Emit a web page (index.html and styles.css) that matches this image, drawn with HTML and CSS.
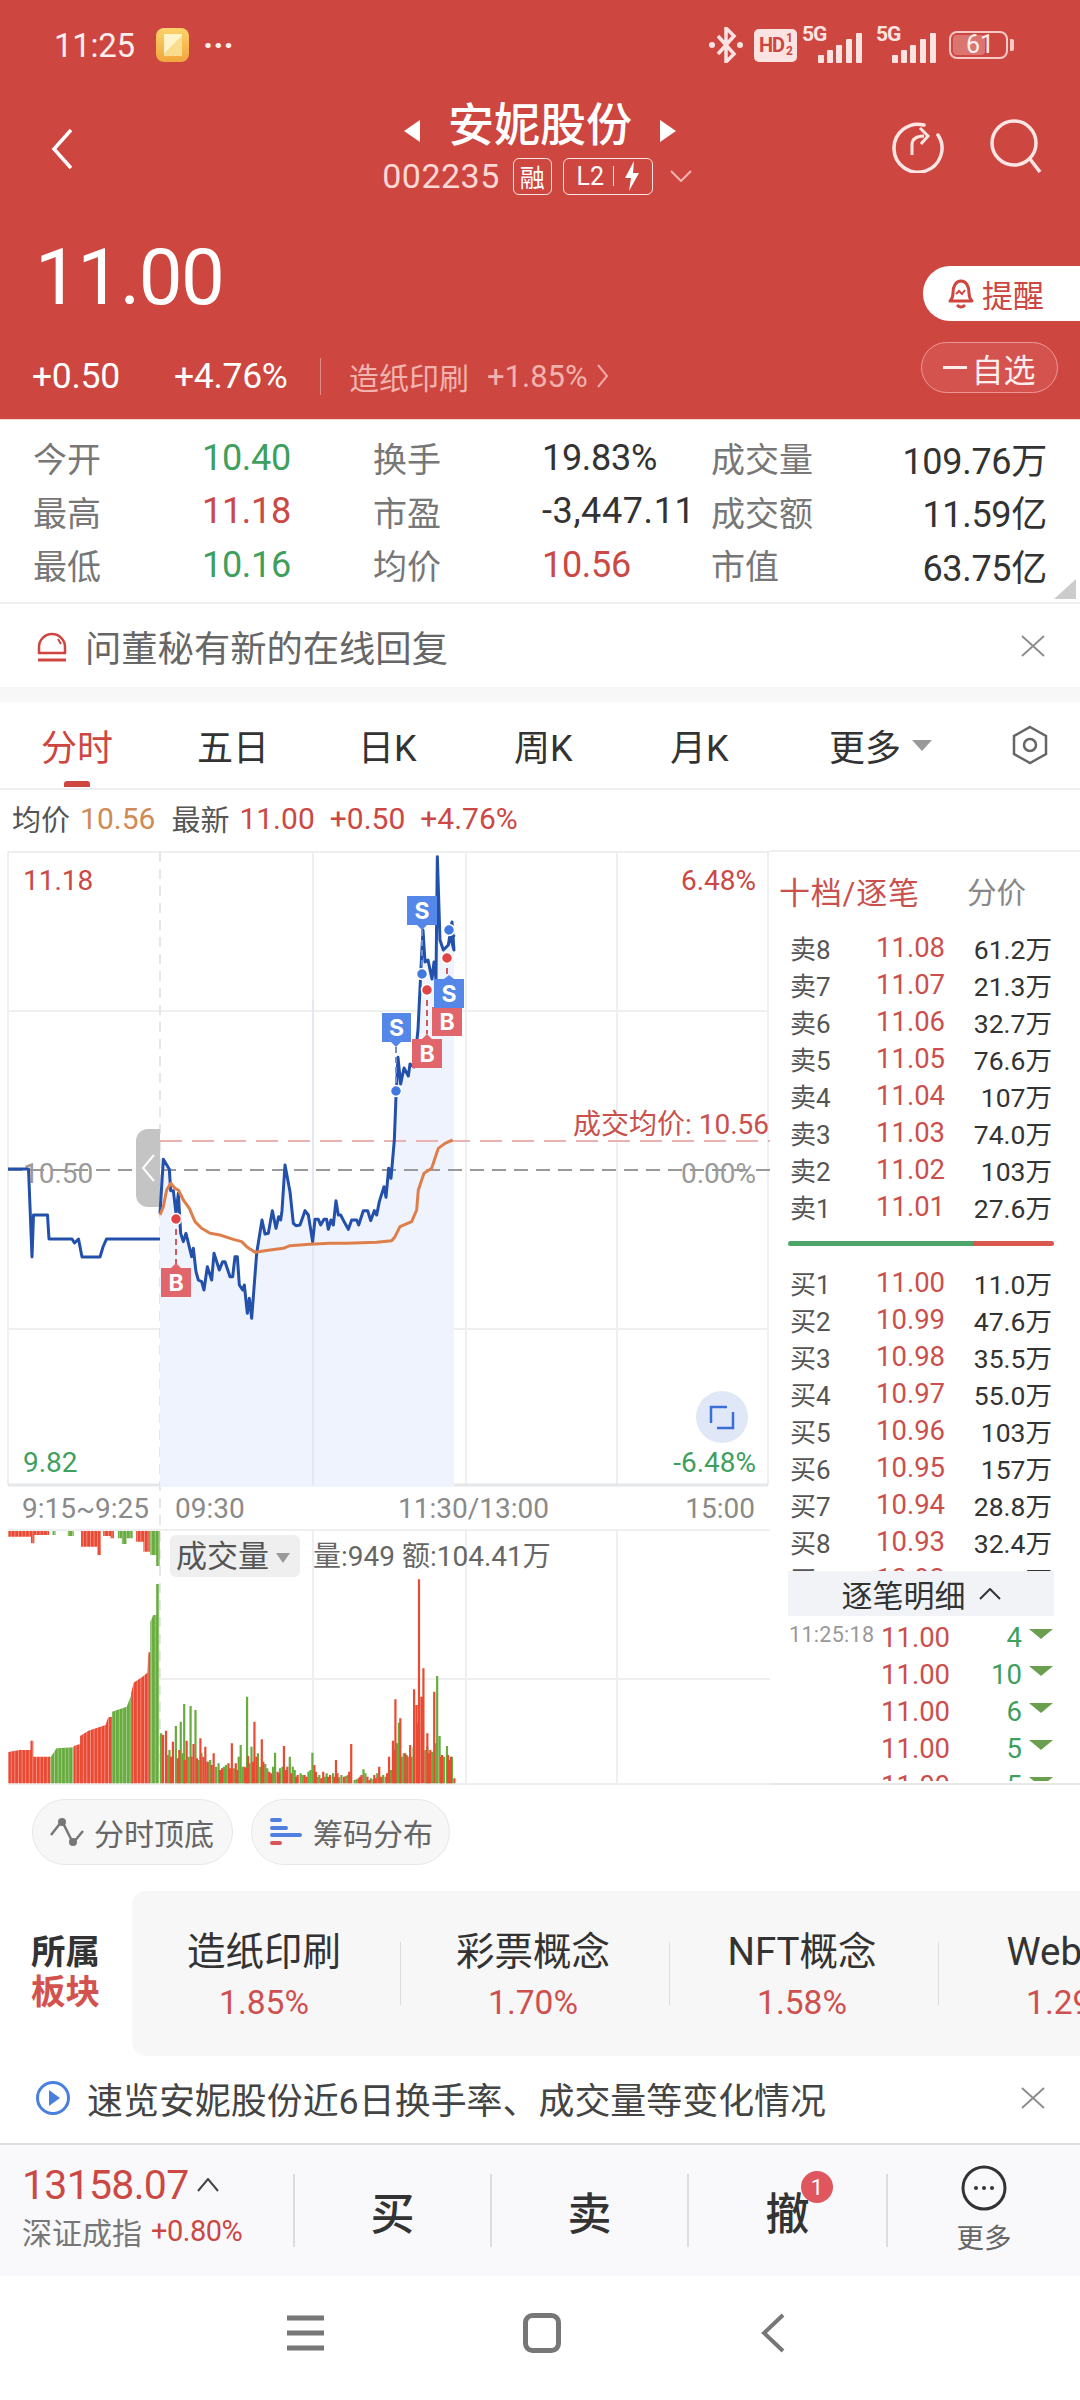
FILE: index.html
```html
<!DOCTYPE html>
<html lang="zh-CN">
<head>
<meta charset="utf-8">
<title>安妮股份</title>
<link rel="stylesheet" href="styles.css">
</head>
<body>
<div class="page">

<header class="head">
  <div class="status">
    <span class="clock">11:25</span>
    <span class="noteicon"><span class="notefold"></span></span>
    <span class="dots">···</span>
    <span class="status-right">
      <svg class="bt" width="34" height="36" viewBox="0 0 34 36"><path d="M9 9l16 18-8 8V1l8 8L9 27" fill="none" stroke="#fbe3e1" stroke-width="3.500"/><circle cx="3" cy="18" r="3" fill="#fbe3e1"/><circle cx="31" cy="18" r="3" fill="#fbe3e1"/></svg>
      <span class="hd">HD<span class="hdfrac">1<br>2</span></span>
      <span class="sig"><span class="fiveg">5G</span>
        <svg width="44" height="30" viewBox="0 0 44 30"><g fill="#fbe3e1"><rect x="0" y="22" width="6" height="8" rx="1"/><rect x="9" y="17" width="6" height="13" rx="1"/><rect x="18" y="12" width="6" height="18" rx="1"/><rect x="28" y="6" width="6" height="24" rx="1"/><rect x="38" y="0" width="6" height="30" rx="1"/></g></svg>
      </span>
      <span class="sig sig2"><span class="fiveg">5G</span>
        <svg width="44" height="30" viewBox="0 0 44 30"><g fill="#fbe3e1"><rect x="0" y="22" width="6" height="8" rx="1"/><rect x="9" y="17" width="6" height="13" rx="1"/><rect x="18" y="12" width="6" height="18" rx="1"/><rect x="28" y="6" width="6" height="24" rx="1"/><rect x="38" y="0" width="6" height="30" rx="1"/></g></svg>
      </span>
      <span class="batt"><span class="battfill"></span><span class="battnum">61</span></span>
      <span class="batttip"></span>
    </span>
  </div>

  <div class="navrow">
    <svg class="back" width="24" height="44" viewBox="0 0 24 44"><path d="M21 3L4 22l17 19" fill="none" stroke="#fff" stroke-width="3.5"/></svg>
    <div class="titlebox">
      <div class="titleline">
        <span class="tri-l"></span>
        <span class="title">安妮股份</span>
        <span class="tri-r"></span>
      </div>
      <div class="codeline">
        <span class="code">002235</span>
        <span class="tag tag-rong">融</span>
        <span class="tag tag-l2">L2<i class="tagbar"></i>
          <svg width="18" height="30" viewBox="0 0 18 30"><path d="M11 0L2 17h6L6 30l10-18h-6z" fill="#fff"/></svg>
        </span>
        <svg class="codechev" width="22" height="12" viewBox="0 0 22 12"><path d="M1 1l10 10L21 1" fill="none" stroke="#f3b5b0" stroke-width="2"/></svg>
      </div>
    </div>
    <div class="navicons">
      <svg width="54" height="54" viewBox="0 0 54 54"><path d="M34 6A24 24 0 1 0 48 16" fill="none" stroke="#fbe6e4" stroke-width="3.5" stroke-linecap="round"/><path d="M22 36V26q0-9 12-9" fill="none" stroke="#fbe6e4" stroke-width="3"/><path d="M30 9l8 8-7 8" fill="none" stroke="#fbe6e4" stroke-width="3"/></svg>
      <svg width="54" height="54" viewBox="0 0 54 54"><circle cx="25" cy="24" r="22" fill="none" stroke="#fbe6e4" stroke-width="3.5"/><path d="M41 40l10 13" stroke="#fbe6e4" stroke-width="3.5" fill="none"/></svg>
    </div>
  </div>

  <div class="pricerow">
    <div class="pricecol">
      <div class="price">11.00</div>
      <div class="chg">
        <span class="chg1">+0.50</span>
        <span class="chg2">+4.76%</span>
        <span class="chgsep"></span>
        <span class="ind">造纸印刷</span>
        <span class="indpct">+1.85%</span>
        <svg width="12" height="24" viewBox="0 0 12 24"><path d="M1 1l9 11-9 11" fill="none" stroke="#f2a9a4" stroke-width="2"/></svg>
      </div>
    </div>
    <div class="btncol">
      <div class="remind">
        <svg width="30" height="32" viewBox="0 0 30 32"><path d="M4 23c2-2 3-4 3-8 0-7 3-12 8-12s8 5 8 12c0 4 1 6 3 8z" fill="none" stroke="#cf4640" stroke-width="3" stroke-linejoin="round"/><path d="M11 27q4 4 8 0" fill="none" stroke="#cf4640" stroke-width="3"/><path d="M10 16l3-3 3 3 3-4" fill="none" stroke="#cf4640" stroke-width="2"/></svg>
        <span>提醒</span>
      </div>
      <div class="addfav"><span class="addminus"></span>自选</div>
    </div>
  </div>
</header>

<section class="stats">
  <span class="lb">今开</span><span class="num green">10.40</span><span class="lb">换手</span><span class="num">19.83%</span><span class="lb">成交量</span><span class="num rt">109.76万</span>
  <span class="lb">最高</span><span class="num red">11.18</span><span class="lb">市盈</span><span class="num wide">-3,447.11</span><span class="lb">成交额</span><span class="num rt">11.59亿</span>
  <span class="lb">最低</span><span class="num green">10.16</span><span class="lb">均价</span><span class="num red">10.56</span><span class="lb">市值</span><span class="num rt">63.75亿</span>
  <span class="corner"></span>
</section>

<section class="notice notice-a">
  <svg width="32" height="32" viewBox="0 0 32 32"><path d="M3 23v-6a13 13 0 0 1 26 0v6z" fill="none" stroke="#cf4640" stroke-width="2.5"/><path d="M2 30h28" stroke="#cf4640" stroke-width="3"/><path d="M22 9l3 5" stroke="#cf4640" stroke-width="2"/></svg>
  <span class="noticetxt">问董秘有新的在线回复</span>
  <svg class="close" width="24" height="22" viewBox="0 0 24 22"><path d="M1 1l22 20M23 1L1 21" stroke="#8b8b8b" stroke-width="1.8" fill="none"/></svg>
</section>

<div class="gap"></div>

<nav class="tabs">
  <span class="tab tab-on">分时</span>
  <span class="tab">五日</span>
  <span class="tab">日K</span>
  <span class="tab">周K</span>
  <span class="tab">月K</span>
  <span class="tab">更多<i class="tabtri"></i></span>
  <svg class="hex" width="36" height="40" viewBox="0 0 36 40"><path d="M18 2l16 9v18l-16 9-16-9V11z" fill="none" stroke="#666" stroke-width="2.5"/><circle cx="18" cy="20" r="6" fill="none" stroke="#666" stroke-width="2.5"/></svg>
</nav>

<div class="summary">
  <span class="s-lb">均价</span><span class="s-avg">10.56</span><span class="s-lb s-new">最新</span><span class="s-red">11.00</span><span class="s-red">+0.50</span><span class="s-red">+4.76%</span>
</div>

<main class="market">
  <svg class="chart" width="770" height="935" viewBox="0 850 770 935">
    <defs>
      <pattern id="stripes" width="3.6" height="10" patternUnits="userSpaceOnUse"><rect width=".9" height="10" fill="#fff" fill-opacity=".4"/></pattern>
    </defs>
    <!-- grid -->
    <path class="grid" d="M8 852H770M8 852V1485M8 1011H768M8 1329H768M313 852V1485M466 852V1485M617 852V1485M768 852V1485"/>
    <path class="gridb" d="M8 1485H768"/>
    <path class="gridd" d="M160 852V1780"/>
    <!-- area -->
    <g transform="translate(130 1100) scale(.33333)">
      <polygon class="area" points="90,340 100,178 118,208 122,272 130,272 138,340 145,280 152,400 160,425 168,400 185,470 190,445 198,515 205,540 215,545 222,570 232,500 245,540 252,460 268,510 278,485 285,485 300,530 308,530 315,470 322,470 328,555 338,570 343,555 352,640 358,595 365,655 380,460 396,360 405,402 415,400 427,332 438,385 446,350 452,360 456,332 465,195 480,275 490,370 498,377 510,375 525,332 535,345 548,425 555,358 565,358 572,375 582,358 590,358 595,388 603,360 610,375 618,302 625,345 632,345 645,370 655,388 665,360 680,360 686,375 700,332 713,332 722,362 733,332 740,345 748,305 762,260 768,292 776,205 783,235 793,120 798,-10 804,-128 812,-48 822,-96 835,-72 840,-108 852,-99 864,-210 875,-438 879,-510 885,-414 894,-420 906,-363 912,-414 918,-363 922,-730 930,-480 940,-450 955,-465 966,-534 972,-450 972,1160 90,1160"/>
    </g>
    <path class="gridl" d="M313 1000V1485"/>
    <!-- dashes -->
    <path class="redline" d="M160 1141H770"/>
    <path class="graymid" d="M8 1170H770"/>
    <!-- labels -->
    <text class="ct red-t" x="23" y="890">11.18</text>
    <text class="ct red-t" x="756" y="890" text-anchor="end">6.48%</text>
    <text class="ct gray-t" x="23" y="1183">10.50</text>
    <text class="ct gray-t" x="756" y="1183" text-anchor="end">0.00%</text>
    <text class="ct green-t" x="23" y="1472">9.82</text>
    <text class="ct green-t" x="756" y="1472" text-anchor="end">-6.48%</text>
    <text class="ct avglabel" x="769" y="1134" text-anchor="end">成交均价: 10.56</text>
    <!-- handle -->
    <path d="M160 1129h-12a12 12 0 0 0-12 12v54a12 12 0 0 0 12 12h12z" fill="#c4c4c4"/>
    <path d="M154 1155l-11 13 11 13" fill="none" stroke="#fff" stroke-width="2"/>
    <!-- lines -->
    <polyline class="pline" points="8,1169 28.5,1169 32,1257 33.5,1215 47.5,1215 49,1239 72,1239 74.5,1243 78.5,1239 82,1257 100,1257 103,1247 106.5,1239 160,1239"/>
    <g transform="translate(130 1100) scale(.33333)">
      <polyline class="pline" points="90,340 100,178 118,208 122,272 130,272 138,340 145,280 152,400 160,425 168,400 185,470 190,445 198,515 205,540 215,545 222,570 232,500 245,540 252,460 268,510 278,485 285,485 300,530 308,530 315,470 322,470 328,555 338,570 343,555 352,640 358,595 365,655 380,460 396,360 405,402 415,400 427,332 438,385 446,350 452,360 456,332 465,195 480,275 490,370 498,377 510,375 525,332 535,345 548,425 555,358 565,358 572,375 582,358 590,358 595,388 603,360 610,375 618,302 625,345 632,345 645,370 655,388 665,360 680,360 686,375 700,332 713,332 722,362 733,332 740,345 748,305 762,260 768,292 776,205 783,235 793,120 798,-10 804,-128 812,-48 822,-96 835,-72 840,-108 852,-99 864,-210 875,-438 879,-510 885,-414 894,-420 906,-363 912,-414 918,-363 922,-730 930,-480 940,-450 955,-465 966,-534 972,-450 960,-495 975,-490"/>
      <polyline class="aline" points="90,345 100,320 110,270 122,250 135,265 145,270 160,300 178,325 195,365 215,385 240,400 270,405 310,418 335,425 350,440 375,457 420,450 460,445 480,437 540,433 600,430 650,430 740,427 785,422 795,410 810,380 845,365 860,330 865,270 882,220 905,205 925,145 945,130 968,120"/>
    </g>
    <!-- trade markers -->
    <path class="dash-r" d="M176 1219V1265"/>
    <path class="dash-b" d="M396 1047V1091"/>
    <path class="dash-b" d="M422 930V974"/>
    <path class="dash-r" d="M427 990V1034"/>
    <path class="dash-r" d="M447 958V975"/>
    <circle class="dot-r" cx="176" cy="1219" r="5.5"/>
    <circle class="dot-b" cx="396" cy="1091" r="5.5"/>
    <circle class="dot-b" cx="422" cy="974" r="5.5"/>
    <circle class="dot-r" cx="427" cy="990" r="5.5"/>
    <circle class="dot-r" cx="447" cy="958" r="5.5"/>
    <circle class="dot-b" cx="449" cy="930" r="5.5"/>

    <g><polygon class="mk-r" points="161,1268 171,1268 176,1263 181,1268 191,1268 191,1297 161,1297"/><text class="mk-t" x="176" y="1291">B</text></g>
    <g><polygon class="mk-r" points="412,1039 422,1039 427,1034 432,1039 442,1039 442,1068 412,1068"/><text class="mk-t" x="427" y="1062">B</text></g>
    <g><rect class="mk-r" x="432" y="1007" width="30" height="29"/><text class="mk-t" x="447" y="1030">B</text></g>
    <g><polygon class="mk-b" points="382,1013 411,1013 411,1042 401,1042 396,1047 391,1042 382,1042"/><text class="mk-t" x="396.500" y="1036">S</text></g>
    <g><polygon class="mk-b" points="407,896 437,896 437,925 427,925 422,930 417,925 407,925"/><text class="mk-t" x="422" y="919">S</text></g>
    <g><polygon class="mk-b" points="434,979 444,979 449,975 454,979 464,979 464,1008 434,1008"/><text class="mk-t" x="449" y="1002">S</text></g>

    <!-- expand -->
    <circle cx="722" cy="1417" r="26" fill="#e0e8f7"/>
    <path d="M711 1423v-16h16M733 1412v16h-16" fill="none" stroke="#3a6fd8" stroke-width="2.5"/>

    <!-- time axis -->
    <text class="ct axis" x="22" y="1518">9:15~9:25</text>
    <text class="ct axis" x="175" y="1518">09:30</text>
    <text class="ct axis" x="398" y="1518">11:30/13:00</text>
    <text class="ct axis" x="755" y="1518" text-anchor="end">15:00</text>

    <!-- volume grid -->
    <path class="grid" d="M8 1530H770M160 1679H770M313 1530V1784M466 1530V1784M617 1530V1784M8 1784H770"/>
    <!-- volume bars -->
    <g transform="translate(0 1490) scale(.4912 .33333)">
      <path class="vol-r" d="M17 123H100V135H70V160H63V140H17Z M165 123H205V195H198V170H165Z M210 123H232V145H225V138H210Z M277 123H305V185H292V155H277Z"/>
      <path class="vol-g" d="M107 123h6V135h-6Z M138 123h12V138h-12Z M240 123H270V145H258V162H248V145H240Z M306 123H325V228H318V195H306Z"/>
      <path class="vol-r" d="M17 880V786L40 780H62V752H68V800H103V880Z M150 880V768L163 762V738L180 722L215 705L220 682L228 680V880Z M267 880V610L272 578L290 560L300 548L302 487L306 487V880Z"/>
      <path class="vol-g" d="M103 880V802L115 775L150 772V880Z M228 880V665L258 650L268 612V880Z M306 880V395L312 375H318V282H324V880Z"/>
      <path class="vbar-g" d="M328 880V730M358 880V708M368 880V695M375 880V642M388 880V648M398 880V660M345 880V780M410 880V790M428 880V810M445 880V820M460 880V825M490 880V765M503 880V620M512 880V770M525 880V790M540 880V822M560 880V788M575 880V830M590 880V800M600 880V840M612 880V850M628 880V845M636 880V788M650 880V855M665 880V850M678 880V850M695 880V855M708 880V855M722 880V870M740 880V838M755 880V865M768 880V850M785 880V860M812 880V698M822 880V790M828 880V795M842 880V770M870 880V770M880 880V785M890 880V558M895 880V738M910 880V768M920 880V800"/>
      <path class="vbar-g" d="M342 880V795M372 880V790M384 880V800M404 880V810M424 880V815M440 880V830M456 880V830M476 880V835M486 880V800M494 880V830M508 880V820M530 880V830M544 880V835M556 880V830M570 880V835M596 880V830M616 880V855M632 880V840M646 880V860M662 880V860M690 880V862M704 880V858M726 880V868M744 880V850M760 880V868M780 880V855M796 880V840M808 880V760M818 880V800M838 880V800M866 880V780M888 880V760M904 880V800"/>
      <path class="vbar-r" d="M332 880V735M338 880V722M352 880V755M365 880V780M380 880V752M394 880V762M408 880V745M418 880V770M435 880V790M452 880V835M465 880V820M472 880V760M480 880V820M498 880V830M505 880V798M518 880V695M533 880V748M548 880V845M565 880V845M578 880V768M585 880V830M606 880V855M620 880V855M640 880V825M658 880V845M672 880V855M684 880V810M700 880V860M715 880V762M730 880V865M736 880V855M748 880V860M762 880V855M772 880V830M792 880V800M800 880V752M805 880V628M815 880V685M825 880V790M835 880V765M843 880V598M848 880V645M853 880V268M858 880V620M862 880V535M870 880V730M876 880V780M884 880V605M900 880V795M912 880V795M918 880V800M925 880V865"/>
      <path class="vbar-r" d="M348 880V800M362 880V805M376 880V810M390 880V800M401 880V805M414 880V800M422 880V815M431 880V825M448 880V840M468 880V835M483 880V840M501 880V835M515 880V815M522 880V800M536 880V815M552 880V850M568 880V850M582 880V840M593 880V850M603 880V860M624 880V860M643 880V845M654 880V865M668 880V860M681 880V860M687 880V850M711 880V845M733 880V860M752 880V870M765 880V865M776 880V860M788 880V850M803 880V780M830 880V800M851 880V700M873 880V790M898 880V800M915 880V810"/>
    </g>
    <rect x="8" y="1531" width="152" height="253" fill="url(#stripes)"/>
    <!-- volume chip -->
    <rect x="170" y="1535" width="130" height="42" rx="6" fill="#efefef"/>
    <text class="ct chip-t" x="176" y="1567">成交量</text>
    <path d="M276 1553h14l-7 10z" fill="#9a9a9a"/>
    <text class="ct vol-t" x="313" y="1566">量:949 额:104.41万</text>
  </svg>

  <aside class="book">
    <div class="bookhead"><span class="bh-a">十档/逐笔</span><span class="bh-b">分价</span></div>
    <div class="rows">
      <div class="row"><span class="r-l">卖8</span><span class="r-p">11.08</span><span class="r-v">61.2万</span></div>
      <div class="row"><span class="r-l">卖7</span><span class="r-p">11.07</span><span class="r-v">21.3万</span></div>
      <div class="row"><span class="r-l">卖6</span><span class="r-p">11.06</span><span class="r-v">32.7万</span></div>
      <div class="row"><span class="r-l">卖5</span><span class="r-p">11.05</span><span class="r-v">76.6万</span></div>
      <div class="row"><span class="r-l">卖4</span><span class="r-p">11.04</span><span class="r-v">107万</span></div>
      <div class="row"><span class="r-l">卖3</span><span class="r-p">11.03</span><span class="r-v">74.0万</span></div>
      <div class="row"><span class="r-l">卖2</span><span class="r-p">11.02</span><span class="r-v">103万</span></div>
      <div class="row"><span class="r-l">卖1</span><span class="r-p">11.01</span><span class="r-v">27.6万</span></div>
    </div>
    <div class="ratio"><span class="ratio-g"></span><span class="ratio-r"></span></div>
    <div class="rows rows-buy">
      <div class="row"><span class="r-l">买1</span><span class="r-p">11.00</span><span class="r-v">11.0万</span></div>
      <div class="row"><span class="r-l">买2</span><span class="r-p">10.99</span><span class="r-v">47.6万</span></div>
      <div class="row"><span class="r-l">买3</span><span class="r-p">10.98</span><span class="r-v">35.5万</span></div>
      <div class="row"><span class="r-l">买4</span><span class="r-p">10.97</span><span class="r-v">55.0万</span></div>
      <div class="row"><span class="r-l">买5</span><span class="r-p">10.96</span><span class="r-v">103万</span></div>
      <div class="row"><span class="r-l">买6</span><span class="r-p">10.95</span><span class="r-v">157万</span></div>
      <div class="row"><span class="r-l">买7</span><span class="r-p">10.94</span><span class="r-v">28.8万</span></div>
      <div class="row"><span class="r-l">买8</span><span class="r-p">10.93</span><span class="r-v">32.4万</span></div>
      <div class="row"><span class="r-l">买9</span><span class="r-p">10.92</span><span class="r-v">15.7万</span></div>
    </div>
    <div class="detail">逐笔明细<svg width="22" height="12" viewBox="0 0 22 12"><path d="M1 11L11 1l10 10" fill="none" stroke="#333" stroke-width="2"/></svg></div>
    <div class="trades">
      <div class="trade"><span class="t-t">11:25:18</span><span class="r-p">11.00</span><span class="t-q">4</span><i class="t-a"></i></div>
      <div class="trade"><span class="t-t"></span><span class="r-p">11.00</span><span class="t-q">10</span><i class="t-a"></i></div>
      <div class="trade"><span class="t-t"></span><span class="r-p">11.00</span><span class="t-q">6</span><i class="t-a"></i></div>
      <div class="trade"><span class="t-t"></span><span class="r-p">11.00</span><span class="t-q">5</span><i class="t-a"></i></div>
      <div class="trade"><span class="t-t"></span><span class="r-p">11.00</span><span class="t-q">5</span><i class="t-a"></i></div>
    </div>
  </aside>
</main>

<section class="tools">
  <span class="toolchip chip-a">
    <svg width="36" height="30" viewBox="0 0 36 30"><path d="M2 18L13 4l11 22 10-12" fill="none" stroke="#777" stroke-width="2.5"/><circle cx="13" cy="5" r="4" fill="#777"/><circle cx="24" cy="25" r="4" fill="#777"/></svg>
    分时顶底
  </span>
  <span class="toolchip chip-b">
    <svg width="32" height="30" viewBox="0 0 32 30"><g stroke-width="4" stroke-linecap="round"><path d="M2 3h8M2 11h14" stroke="#4f80e0"/><path d="M2 18h28" stroke="#4f80e0"/><path d="M2 26h8" stroke="#d9555a"/></g></svg>
    筹码分布
  </span>
</section>

<section class="sectors">
  <div class="sec-label"><span>所属</span><span class="sec-red">板块</span></div>
  <div class="sec-card">
    <div class="sec"><span class="sec-n">造纸印刷</span><span class="sec-p">1.85%</span></div>
    <div class="sec"><span class="sec-n">彩票概念</span><span class="sec-p">1.70%</span></div>
    <div class="sec"><span class="sec-n">NFT概念</span><span class="sec-p">1.58%</span></div>
    <div class="sec"><span class="sec-n">Web3.0</span><span class="sec-p">1.29%</span></div>
  </div>
</section>

<section class="notice notice-b">
  <svg width="36" height="36" viewBox="0 0 36 36"><circle cx="18" cy="18" r="15.500" fill="none" stroke="#4a7fdf" stroke-width="3"/><path d="M14 10l11 8-11 8z" fill="#4a7fdf"/></svg>
  <span class="noticetxt txt-dark">速览安妮股份近6日换手率、成交量等变化情况</span>
  <svg class="close" width="24" height="22" viewBox="0 0 24 22"><path d="M1 1l22 20M23 1L1 21" stroke="#8b8b8b" stroke-width="1.800" fill="none"/></svg>
</section>

<section class="actions">
  <div class="act-index">
    <div class="idx-top"><span class="idx-num">13158.07</span><svg width="22" height="14" viewBox="0 0 22 14"><path d="M1 13L11 1l10 12" fill="none" stroke="#444" stroke-width="2"/></svg></div>
    <div class="idx-sub"><span class="idx-name">深证成指</span><span class="idx-pct">+0.80%</span></div>
  </div>
  <div class="act">买</div>
  <div class="act">卖</div>
  <div class="act act-badge">撤<span class="badge">1</span></div>
  <div class="act act-more">
    <svg class="moreicon" width="46" height="46" viewBox="0 0 46 46"><circle cx="23" cy="23" r="21" fill="none" stroke="#333" stroke-width="3"/><circle cx="15" cy="23" r="2" fill="#333"/><circle cx="23" cy="23" r="2" fill="#333"/><circle cx="31" cy="23" r="2" fill="#333"/></svg>
    <span class="more-t">更多</span>
  </div>
</section>

<footer class="sysnav">
  <svg width="37" height="36" viewBox="0 0 37 36"><path d="M0 3h37M0 18h37M0 33h37" stroke="#777" stroke-width="5"/></svg>
  <svg width="38" height="40" viewBox="0 0 38 40"><rect x="2.500" y="2.500" width="33" height="35" rx="7" fill="none" stroke="#777" stroke-width="5"/></svg>
  <svg width="26" height="40" viewBox="0 0 26 40"><path d="M23 2L4 20l19 18" fill="none" stroke="#777" stroke-width="4"/></svg>
</footer>

</div>
</body>
</html>
```

FILE: styles.css
```css
* { box-sizing: border-box; }
html, body { margin: 0; padding: 0; background: #fff; }
body { font-family: Roboto, "Noto Sans CJK SC", sans-serif; color: #333; }
.page { width: 1080px; height: 2400px; overflow: hidden; display: flex; flex-direction: column; }

/* header */
.head { height: 420px; background: #ce4640; color: #fff; flex: none; border-bottom: 1px solid #f3d5d3; }
.status { height: 90px; display: flex; align-items: center; padding-left: 54px; }
.clock { font-size: 33px; color: #fdeeed; width: 102px; letter-spacing: -.3px; }
.noteicon { width: 33px; height: 34px; border-radius: 8px; background: linear-gradient(#fcd36a, #f1a63c); display: flex; align-items: center; justify-content: center; }
.notefold { width: 18px; height: 22px; background: linear-gradient(135deg, #fff4c9 50%, #f9dd8e 50%); }
.dots { font-size: 34px; font-weight: 700; margin-left: 14px; letter-spacing: 0; color: #fdeeed; line-height: 1; }
.status-right { margin-left: auto; display: flex; align-items: center; width: 371px; height: 40px; position: relative; }
.bt { margin-right: 11px; flex: none; }
.hd { width: 43px; height: 33px; background: #fbe3e1; border-radius: 5px; color: #ce4640; font-size: 20px; font-weight: 700; display: flex; align-items: center; justify-content: center; letter-spacing: -1px; flex: none; }
.hdfrac { font-size: 12px; line-height: 13px; margin-left: 2px; }
.sig { position: relative; width: 60px; height: 34px; margin-left: 5px; flex: none; margin-top: -3px; }
.sig svg { position: absolute; left: 16px; bottom: -2px; }
.sig2 { margin-left: 14px; }
.fiveg { position: absolute; left: 0; top: -5px; font-size: 21px; font-weight: 700; color: #fbe3e1; letter-spacing: -1px; }
.batt { width: 59px; height: 28px; border: 2px solid #f5c9c5; border-radius: 8px; margin-left: 13px; position: relative; flex: none; overflow: hidden; }
.battfill { position: absolute; left: 2px; top: 2px; bottom: 2px; width: 32px; background: #dc7570; border-radius: 4px; }
.battnum { position: absolute; left: 15px; right: 0; top: -3px; text-align: left; font-size: 25px; color: #fdeeed; line-height: 30px; }
.batttip { width: 4px; height: 12px; background: #f5c9c5; border-radius: 0 2px 2px 0; margin-left: 2px; flex: none; }

.navrow { height: 112px; display: grid; grid-template-columns: 1fr auto 1fr; align-items: start; }
.back { margin: 37px 0 0 50px; }
.titlebox { display: flex; flex-direction: column; align-items: center; }
.titleline { display: flex; align-items: center; height: 66px; margin-top: 2px; }
.title { font-size: 46px; font-weight: 500; line-height: 66px; margin: 0 28px; }
.tri-l, .tri-r { width: 0; height: 0; border-top: 11px solid transparent; border-bottom: 11px solid transparent; margin-top: 12px; }
.tri-l { border-right: 16px solid #fff; }
.tri-r { border-left: 16px solid #fff; }
.codeline { display: flex; align-items: center; height: 38px; margin-top: -1px; margin-left: -6px; }
.code { font-size: 34px; color: #fbd8d5; letter-spacing: .5px; margin-right: 13px; }
.tag { height: 37px; border: 1.5px solid #fde3e1; border-radius: 6px; display: flex; align-items: center; justify-content: center; color: #fff; }
.tag-rong { width: 39px; font-size: 25px; margin-right: 11px; }
.tag-l2 { width: 90px; font-size: 25px; gap: 9px; padding-left: 2px; }
.tagbar { width: 1px; height: 20px; background: #fde3e1; }
.codechev { margin-left: 17px; }
.navicons { display: flex; justify-content: flex-end; gap: 45px; padding: 29px 37px 0 0; }

.pricerow { display: flex; justify-content: space-between; height: 218px; }
.pricecol { padding-top: 36px; }
.price { font-size: 78px; line-height: 80px; padding-left: 35px; letter-spacing: -1.500px; }
.chg { display: flex; align-items: center; height: 44px; margin-top: 36px; padding-left: 32px; }
.chg1 { font-size: 35.500px; width: 142px; letter-spacing: -.3px; }
.chg2 { font-size: 35.500px; width: 146px; letter-spacing: -.3px; }
.chgsep { width: 1px; height: 37px; background: #e08b86; margin: 0 28px 0 0; }
.ind { font-size: 30px; color: #f2b2ad; margin-right: 18px; }
.indpct { font-size: 31px; color: #f2b2ad; margin-right: 9px; }
.btncol { padding-top: 64px; display: flex; flex-direction: column; align-items: flex-end; }
.remind { width: 157px; height: 55px; background: #fff; border-radius: 27px 0 0 27px; display: flex; align-items: center; padding-left: 23px; gap: 6px; color: #ce4640; font-size: 31px; }
.addfav { width: 137px; height: 51px; margin: 21px 22px 0 0; border-radius: 26px; border: 1.5px solid #ea9a96; background: #d5534e; display: flex; align-items: center; justify-content: center; font-size: 32px; color: #fdeeed; }
.addminus { width: 24px; height: 3px; background: #fdeeed; margin-right: 4px; }

/* stats */
.stats { flex: none; height: 184px; padding: 11px 33px 0; display: grid; grid-template-columns: 169px 171px 169px 169px 116px 1fr; grid-auto-rows: 53.500px; align-items: center; border-bottom: 2px solid #eee; position: relative; }
.lb { font-size: 34px; color: #777; }
.num { font-size: 36px; color: #333; letter-spacing: -.3px; white-space: nowrap; }
.wide { letter-spacing: .6px; }
.rt { text-align: right; }
.green { color: #3f9f5e; }
.red { color: #cb4844; }
.corner { position: absolute; right: 4px; bottom: 3px; width: 0; height: 0; border-left: 22px solid transparent; border-bottom: 20px solid #ccc; }

/* notices */
.notice { flex: none; display: flex; align-items: center; background: #fff; }
.notice-a { height: 83px; padding: 0 35px 0 36px; }
.notice-b { height: 89px; padding: 0 35px 4px 35px; border-bottom: 2px solid #ddd; }
.noticetxt { font-size: 36.300px; color: #666; margin-left: 17px; flex: 1; white-space: nowrap; }
.txt-dark { color: #444; margin-left: 16px; font-size: 35.950px; }
.gap { flex: none; height: 15px; background: #f7f7f7; }

/* tabs */
.tabs { flex: none; height: 88px; padding: 0 32px 0 41px; display: grid; grid-template-columns: 156px 161px 156px 156px 159px 183px 1fr; align-items: center; border-bottom: 2px solid #eee; position: relative; font-size: 36px; }
.tab { color: #333; display: flex; align-items: center; }
.tab-on { color: #ce4640; position: relative; }
.tab-on::after { content: ""; position: absolute; left: 23px; top: 62px; width: 26px; height: 6px; background: #ce4640; border-radius: 3px 3px 0 0; }
.tabtri { width: 0; height: 0; border-left: 10px solid transparent; border-right: 10px solid transparent; border-top: 11px solid #999; margin: 0 0 0 11px; }
.hex { justify-self: end; margin-right: 0; }

.summary { flex: none; height: 60px; padding: 0 0 4px 12px; display: flex; align-items: center; font-size: 30px; }
.s-lb { color: #555; margin-right: 10px; font-size: 29px; }
.s-avg { color: #cf8a55; margin-right: 16px; }
.s-new { margin-right: 10px; }
.s-red { color: #cb4844; margin-right: 15px; }

/* chart */
.market { flex: none; height: 935px; display: flex; }
.chart { display: block; flex: none; }
.grid { stroke: #eeeff1; stroke-width: 2; fill: none; }
.gridb { stroke: #e6e7ea; stroke-width: 3; fill: none; }
.gridd { stroke: #e6e6e6; stroke-width: 2; stroke-dasharray: 10 7; fill: none; }
.gridl { stroke: #e5e8f0; stroke-width: 2; fill: none; }
.area { fill: #eef3fd; }
.redline { stroke: #e8b2b0; stroke-width: 2; stroke-dasharray: 22 10; fill: none; }
.graymid { stroke: #999; stroke-width: 2; stroke-dasharray: 14 8; fill: none; }
.pline { fill: none; stroke: #2350ab; stroke-width: 3; stroke-linejoin: round; vector-effect: non-scaling-stroke; }
.aline { fill: none; stroke: #de7f4b; stroke-width: 3; stroke-linejoin: round; vector-effect: non-scaling-stroke; }
.ct { font-family: Roboto, "Noto Sans CJK SC", sans-serif; font-size: 28px; }
.red-t { fill: #cb4844; }
.gray-t { fill: #9a9a9a; }
.green-t { fill: #3f9f5e; }
.avglabel { fill: #c9504c; font-size: 28px; }
.axis { fill: #8a8a8a; }
.chip-t { fill: #555; font-size: 31px; }
.vol-t { fill: #666; font-size: 28px; }
.dash-r { stroke: #cf5a5d; stroke-width: 2; stroke-dasharray: 6 4; fill: none; }
.dash-b { stroke: #6b8fd0; stroke-width: 2; stroke-dasharray: 6 4; fill: none; }
.dot-r { fill: #e04444; stroke: #fff; stroke-width: 1.500; }
.dot-b { fill: #3f78e0; stroke: #fff; stroke-width: 1.500; }
.mk-r { fill: #e0666b; }
.mk-b { fill: #5587e8; }
.mk-t { fill: #fff; font-family: Inter, sans-serif; font-size: 23px; font-weight: 700; text-anchor: middle; }
.vol-r { fill: #ea4a33; }
.vol-g { fill: #68ab3e; }
.vbar-r { stroke: #ea4a33; stroke-width: 2.200; fill: none; vector-effect: non-scaling-stroke; }
.vbar-g { stroke: #68ab3e; stroke-width: 2.200; fill: none; vector-effect: non-scaling-stroke; }

/* order book */
.book { flex: 1; width: 310px; border-top: 2px solid #eee; border-bottom: 2px solid #e8e8e8; }
.bookhead { height: 76px; padding: 0 0 0 9px; display: flex; align-items: center; }
.bh-a { font-size: 31px; color: #c9504c; width: 188px; letter-spacing: .8px; }
.bh-b { font-size: 29.500px; color: #888; }
.rows { height: 296px; }
.rows-buy { height: 308px; margin-top: 17px; overflow: hidden; }
.row { height: 37px; display: grid; grid-template-columns: 86px 90px 1fr; align-items: center; padding: 0 28px 0 20px; white-space: nowrap; }
.r-l { font-size: 26px; color: #555; }
.r-p { font-size: 27.500px; color: #cb4f4d; }
.r-v { font-size: 26.500px; color: #333; text-align: right; }
.ratio { margin: 17px 26px 0 18px; height: 5px; display: flex; }
.ratio-g { width: 185px; background: #4ea56a; border-radius: 3px 0 0 3px; }
.ratio-r { flex: 1; background: #d8574f; border-radius: 0 3px 3px 0; }
.detail { height: 45px; margin: 0 26px 0 18px; background: #f1f3f7; display: flex; align-items: center; justify-content: center; gap: 13px; font-size: 31px; color: #333; }
.trades { height: 165px; overflow: hidden; padding-top: 3px; }
.trade { height: 37px; display: grid; grid-template-columns: 92px 70px 1fr 31px; align-items: center; padding: 0 27px 0 19px; white-space: nowrap; }
.t-t { font-size: 21.500px; color: #999; margin-top: -6px; letter-spacing: .3px; }
.t-q { font-size: 27.500px; color: #3f9f5e; text-align: right; }
.t-a { justify-self: end; width: 0; height: 0; border-left: 12px solid transparent; border-right: 12px solid transparent; border-top: 10px solid #6a9f50; margin-top: -8px; }

/* tools */
.tools { flex: none; height: 106px; padding: 14px 0 0 32px; display: flex; gap: 18px; align-items: flex-start; }
.toolchip { height: 66px; border: 1.500px solid #e8e8e8; background: #f7f7f7; border-radius: 33px; display: flex; align-items: center; font-size: 30px; color: #666; gap: 9px; }
.chip-a { width: 201px; padding-left: 16px; }
.chip-b { width: 199px; padding-left: 18px; gap: 11px; }

/* sectors */
.sectors { flex: none; height: 165px; display: flex; }
.sec-label { width: 132px; flex: none; padding: 41px 0 0 31px; display: flex; flex-direction: column; font-size: 34.500px; font-weight: 700; line-height: 40px; color: #333; }
.sec-red { color: #d4524e; }
.sec-card { flex: 1; background: #f7f7f7; border-radius: 14px 0 0 14px; display: flex; overflow: hidden; padding-top: 51px; }
.sec { width: 269px; flex: none; display: flex; flex-direction: column; align-items: center; border-right: 1.500px solid #dcdcdc; height: 63px; white-space: nowrap; padding-right: 4px; }
.sec-n { font-size: 38.500px; color: #333; line-height: 44px; margin-top: -12px; }
.sec-p { font-size: 33.500px; color: #cf4f4f; line-height: 40px; margin-top: 9px; }

/* action bar */
.actions { flex: none; height: 131px; background: #f9f9fb; display: grid; grid-template-columns: 293px 197px 197px 199px 1fr; padding-top: 29px; align-items: start; }
.act-index { height: 73px; padding-left: 22px; position: relative; }
.idx-top { display: flex; align-items: center; margin-top: -12px; height: 46px; }
.idx-num { font-size: 41px; color: #cb4844; width: 175px; letter-spacing: -.7px; }
.idx-sub { display: flex; align-items: center; height: 40px; margin-top: 3px; }
.idx-name { font-size: 30px; color: #777; margin-right: 9px; }
.idx-pct { font-size: 29px; color: #cb4844; letter-spacing: -.5px; }
.act { height: 73px; border-left: 2px solid #ddd; display: flex; align-items: center; justify-content: center; font-size: 44px; color: #333; position: relative; font-weight: 500; }
.act-badge { padding-right: 0; }
.badge { position: absolute; left: 112px; top: -3px; width: 32px; height: 32px; border-radius: 50%; background: #e0565f; color: #fff; font-size: 22px; font-weight: 400; display: flex; align-items: center; justify-content: center; }
.act-more { flex-direction: column; gap: 10px; padding-right: 0; }
.moreicon { flex: none; }
.more-t { font-size: 27.500px; color: #666; font-weight: 400; line-height: 36px; flex: none; }

/* system nav */
.sysnav { flex: 1; background: #fff; display: flex; align-items: center; justify-content: center; gap: 199px; padding: 0 8px 10px 0; }
```
